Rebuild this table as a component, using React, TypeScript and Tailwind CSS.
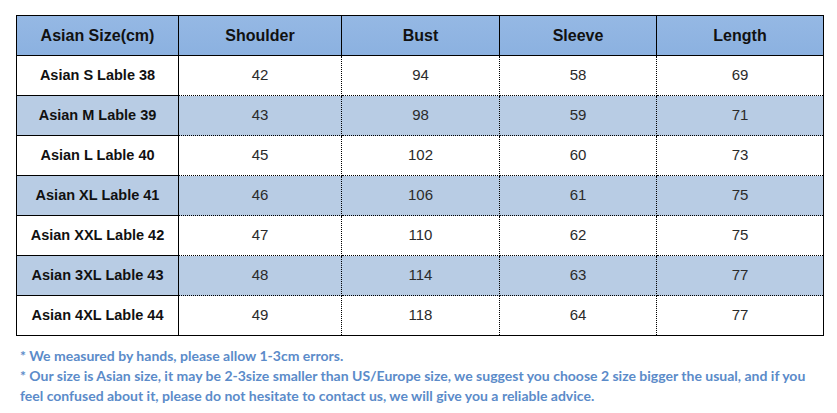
const rows = [
  { size: "Asian S Lable 38", shoulder: 42, bust: 94, sleeve: 58, length: 69 },
  { size: "Asian M Lable 39", shoulder: 43, bust: 98, sleeve: 59, length: 71 },
  { size: "Asian L Lable 40", shoulder: 45, bust: 102, sleeve: 60, length: 73 },
  { size: "Asian XL Lable 41", shoulder: 46, bust: 106, sleeve: 61, length: 75 },
  { size: "Asian XXL Lable 42", shoulder: 47, bust: 110, sleeve: 62, length: 75 },
  { size: "Asian 3XL Lable 43", shoulder: 48, bust: 114, sleeve: 63, length: 77 },
  { size: "Asian 4XL Lable 44", shoulder: 49, bust: 118, sleeve: 64, length: 77 },
];

const headers = ["Asian Size(cm)", "Shoulder", "Bust", "Sleeve", "Length"];
const widths = ["w-[162px]", "w-[163px]", "w-[158px]", "w-[157px]", "w-[167px]"];

export default function App() {
  return (
    <div className="h-[413px] w-[837px] bg-white pt-[15px] pl-[16px] font-['Liberation_Sans',Arial,sans-serif] text-[#111]">
      <table className="border-collapse border border-solid border-black text-center">
        <thead>
          <tr className="h-[40px] bg-gradient-to-b from-[#95b8e4] to-[#8bb1e0]">
            {headers.map((h, i) => (
              <th
                key={h}
                className={`${widths[i]} border border-solid border-black p-0 text-[16px] font-bold`}
              >
                {h}
              </th>
            ))}
          </tr>
        </thead>
        <tbody>
          {rows.map((r, i) => (
            <tr key={r.size} className={`h-[40px] ${i % 2 === 1 ? "bg-[#b8cce4]" : "bg-white"}`}>
              <td className="border border-solid border-black p-0 text-[14.5px] font-bold">{r.size}</td>
              {[r.shoulder, r.bust, r.sleeve, r.length].map((v, j) => (
                <td
                  key={j}
                  className="border border-dotted border-black p-0 text-[15px] text-[#2a2a2a]"
                >
                  {v}
                </td>
              ))}
            </tr>
          ))}
        </tbody>
      </table>
      <div className="mt-[10px] pl-[4px] font-['Lato',sans-serif] text-[14px] font-bold leading-[20px] text-[#5b8bc9]">
        <p>* We measured by hands, please allow 1-3cm errors.</p>
        <p className="w-[790px]">
          * Our size is Asian size, it may be 2-3size smaller than US/Europe size, we suggest you choose 2 size
          bigger the usual, and if you feel confused about it, please do not hesitate to contact us, we will give you
          a reliable advice.
        </p>
      </div>
    </div>
  );
}
